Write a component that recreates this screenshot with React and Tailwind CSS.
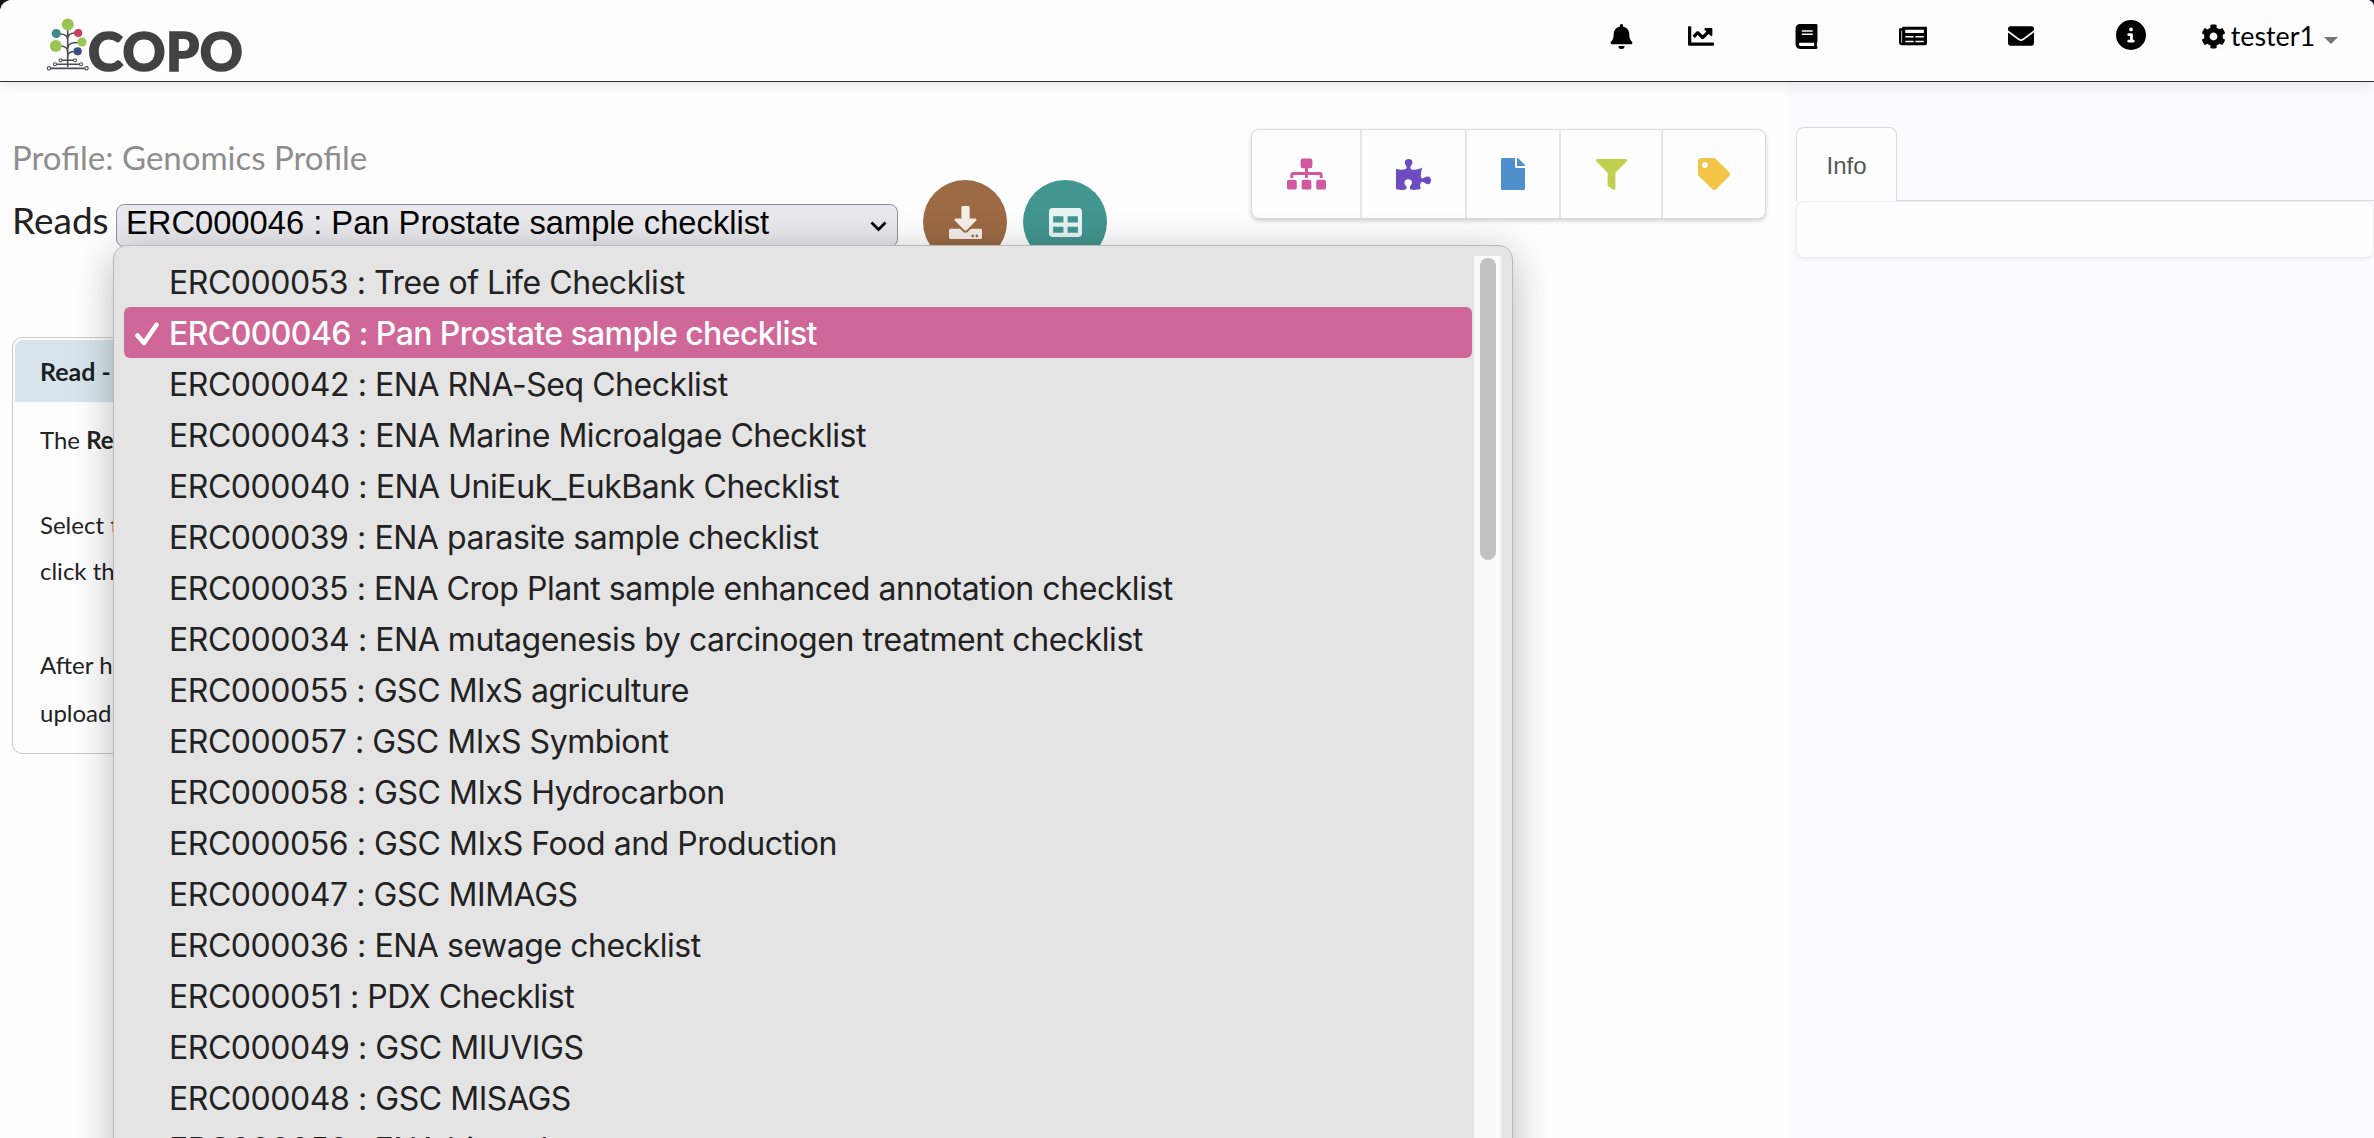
import React from "react";
import { FaBell, FaChartLine, FaBook, FaNewspaper, FaEnvelope, FaCog, FaSitemap, FaPuzzlePiece, FaFile, FaFilter, FaTag, FaDownload, FaTable } from "react-icons/fa";

const options = [
  "ERC000053 : Tree of Life Checklist",
  "ERC000046 : Pan Prostate sample checklist",
  "ERC000042 : ENA RNA-Seq Checklist",
  "ERC000043 : ENA Marine Microalgae Checklist",
  "ERC000040 : ENA UniEuk_EukBank Checklist",
  "ERC000039 : ENA parasite sample checklist",
  "ERC000035 : ENA Crop Plant sample enhanced annotation checklist",
  "ERC000034 : ENA mutagenesis by carcinogen treatment checklist",
  "ERC000055 : GSC MIxS agriculture",
  "ERC000057 : GSC MIxS Symbiont",
  "ERC000058 : GSC MIxS Hydrocarbon",
  "ERC000056 : GSC MIxS Food and Production",
  "ERC000047 : GSC MIMAGS",
  "ERC000036 : ENA sewage checklist",
  "ERC000051 : PDX Checklist",
  "ERC000049 : GSC MIUVIGS",
  "ERC000048 : GSC MISAGS",
  "ERC000050 : ENA binned metagenome",
];

function Logo() {
  return (
    <svg className="block h-[54px] w-[44px] shrink-0" viewBox="46 17 44 54" fill="none">
      <g stroke="#4c4c52" strokeWidth="1.6">
        <path d="M67.700 30V67M60 34c5 0 7.700 2 7.700 6M75 33c-5 0-7.300 2-7.300 6M60 46c5 0 7.700 2 7.700 6M79 42.500c-7 0-11.300 1-11.300 6M75 51.500c-5 0-7.300 1-7.300 6M62 60.200H73.500M56.500 64.300H79.500M50.500 68.400H85" />
        <g fill="#fff" strokeWidth="1.100">
          <circle cx="60.500" cy="60.200" r="1.500" /><circle cx="75" cy="60.200" r="1.500" />
          <circle cx="55" cy="64.300" r="1.500" /><circle cx="81" cy="64.300" r="1.500" />
          <circle cx="49" cy="68.300" r="1.700" /><circle cx="86.500" cy="68.300" r="1.700" />
        </g>
      </g>
      <circle cx="67.800" cy="24.500" r="6" fill="#9bc455" />
      <circle cx="56.300" cy="33.500" r="4.600" fill="#41888b" />
      <circle cx="78.200" cy="33" r="4.100" fill="#cb3f60" />
      <circle cx="55.800" cy="46" r="6" fill="#9bc455" />
      <circle cx="82" cy="42" r="4.600" fill="#9bc455" />
      <circle cx="77.700" cy="51.300" r="4.100" fill="#374e82" />
    </svg>
  );
}

function InfoIcon() {
  return (
    <svg className="h-[30px] w-[30px]" viewBox="0 0 512 512">
      <path fill="#000" d="M256 512A256 256 0 1 0 256 0a256 256 0 1 0 0 512zM216 336h24V272H216c-13.300 0-24-10.700-24-24s10.700-24 24-24h48c13.300 0 24 10.700 24 24v88h8c13.300 0 24 10.700 24 24s-10.700 24-24 24H216c-13.300 0-24-10.700-24-24s10.700-24 24-24zm40-208a32 32 0 1 1 0 64 32 32 0 1 1 0-64z" />
    </svg>
  );
}

function Header() {
  return (
    <header className="z-10 flex h-[82px] w-full shrink-0 border-b border-[#2e2e2e] bg-[#fdfdfd] pl-[46px] shadow-[0_2px_14px_rgba(0,0,0,0.10)]">
      <div className="flex pt-[17px]">
        <Logo />
        <div className="mt-[6px] ml-[-2px] flex h-[54px] items-center font-[Lato] text-[53px] leading-none font-black tracking-[0.5px] text-[#424242] [-webkit-text-stroke:1.6px_#424242]">
          COPO
        </div>
      </div>
      <nav className="ml-auto flex h-[72px] items-center text-black">
        <FaBell className="mr-[54px] size-[25px]" />
        <FaChartLine className="mr-[80px] size-[26px]" />
        <FaBook className="mr-[80px] size-[25px]" />
        <FaNewspaper className="mr-[81px] size-[28px]" />
        <FaEnvelope className="mr-[82px] size-[26px]" />
        <span className="mr-[55px] -mt-[3px]"><InfoIcon /></span>
        <FaCog className="size-[25px]" />
        <span className="ml-[5px] font-[Lato] text-[26.800px]">tester1</span>
        <span className="mt-[9px] mr-[36px] ml-[9px] border-x-[7px] border-t-[7px] border-x-transparent border-t-[#777]" />
      </nav>
    </header>
  );
}

function Toolbar() {
  return (
    <div className="mt-[47px] mr-[21px] ml-auto flex h-[90px] w-[515px] rounded-[8px] border border-[#dadada] bg-[#fefefe] shadow-[0_2px_4px_rgba(0,0,0,0.18)]">
      <div className="flex w-[110px] items-center justify-center border-r-2 border-[#e6e6e6]"><FaSitemap className="h-[32px] w-[39px] text-[#d1589f]" /></div>
      <div className="flex w-[105px] items-center justify-center border-r-2 border-[#e6e6e6]"><FaPuzzlePiece className="size-[35px] text-[#6c4bc3]" /></div>
      <div className="flex w-[94px] items-center justify-center border-r-2 border-[#e6e6e6]"><FaFile className="size-[32px] text-[#4f8fcc]" /></div>
      <div className="flex w-[102px] items-center justify-center border-r-2 border-[#e6e6e6]"><FaFilter className="size-[31px] text-[#c0d04e]" /></div>
      <div className="flex flex-1 items-center justify-center"><FaTag className="size-[32px] text-[#f2c448]" /></div>
    </div>
  );
}

function ReadPanel() {
  return (
    <section className="mt-[73px] ml-[12px] h-[417px] w-[1300px] rounded-[10px] border border-[#c9c9c9] bg-[#fefefe] p-[2px] font-[Lato] text-[24px] text-[#222]">
      <h2 className="h-[62px] rounded-t-[8px] bg-[#d7e4eb] pl-[25px] text-[25px] leading-[62px] font-bold text-[#1a1f24]">Read -</h2>
      <div className="pl-[25px]">
        <p className="mt-[15px] h-[46px] leading-[46px]">The <b>Reads</b></p>
        <p className="mt-[39px] h-[46px] leading-[46px]">Select the</p>
        <p className="h-[46px] leading-[46px]">click the</p>
        <p className="mt-[48px] h-[46px] leading-[46px]">After having</p>
        <p className="mt-[2px] h-[46px] leading-[46px]">upload</p>
      </div>
    </section>
  );
}

function Menu() {
  return (
    <div className="absolute top-[245px] left-[113px] z-20 flex h-[940px] w-[1400px] rounded-[14px] border border-[#b9b9b9] bg-[#e4e4e4] pt-[10px] pl-[10px] shadow-[0_8px_40px_rgba(0,0,0,0.28)]">
      <ul className="w-[1348px] font-[Inter] text-[32px] tracking-[-0.450px] text-[#222]">
        {options.map((label, i) => (
          <li
            key={label}
            className={i === 1
              ? "flex h-[51px] items-center rounded-[6px] bg-[#d06799] pt-[3px] font-medium tracking-[-0.600px] text-white"
              : "flex h-[51px] items-center pt-[3px]"}
          >
            <span className="flex w-[45px] shrink-0 justify-center">
              {i === 1 && (
                <svg className="h-[24px] w-[26px]" viewBox="0 0 26 24" fill="none" stroke="#fff" strokeWidth="4.600" strokeLinecap="round" strokeLinejoin="round">
                  <path d="M3.500 13.500L10 21L22.500 2.800" />
                </svg>
              )}
            </span>
            <span className="whitespace-nowrap">{label}</span>
          </li>
        ))}
      </ul>
      <div className="ml-[2px] w-[28px] border-r-2 border-[#eeeeee] bg-[#fafafa] pt-[2px] pl-[6px]">
        <div className="h-[302px] w-[16px] rounded-full bg-[#c1c1c1]" />
      </div>
    </div>
  );
}

export default function App() {
  return (
    <div className="bg-[#15151c]">
      <div className="relative flex h-[1138px] w-[2374px] flex-col overflow-hidden rounded-tl-[12px] rounded-tr-[7px] bg-[#fefefe]">
        <Header />
        <main className="flex flex-1">
          <div className="w-[1787px]">
            <div className="flex">
              <div className="ml-[12px] w-[1100px]">
                <p className="mt-[53px] h-[44px] font-[Lato] text-[33px] leading-[44px] text-[#8e8e8e]">Profile: Genomics Profile</p>
                <div className="mt-px flex h-[84px]">
                  <h1 className="mt-[18px] w-[104px] font-[Lato] text-[37px] leading-[44px] text-[#222]">Reads</h1>
                  <div className="mt-[24px] flex h-[43px] w-[782px] items-center rounded-[8px] border border-[#8f8f9d] bg-[#e9e9ed] pr-[10px] pl-[9px] font-['Liberation_Sans'] text-[32.700px] leading-none text-black">
                    <span className="-mt-[4px] whitespace-nowrap">ERC000046 : Pan Prostate sample checklist</span>
                    <svg className="mt-[2px] ml-auto h-[11px] w-[17px]" viewBox="0 0 17 11" fill="none" stroke="#000" strokeWidth="2.800"><path d="M1.500 1.500L8.500 8.500L15.500 1.500" /></svg>
                  </div>
                  <button className="ml-[25px] flex size-[84px] shrink-0 items-center justify-center rounded-full bg-[#9c6a44] text-[#f5efea]"><FaDownload className="size-[33px]" /></button>
                  <button className="ml-[16px] flex size-[84px] shrink-0 items-center justify-center rounded-full bg-[#42968f] text-[#e6f4f3]"><FaTable className="size-[33px]" /></button>
                </div>
              </div>
              <Toolbar />
            </div>
            <ReadPanel />
          </div>
          <aside className="flex-1 bg-[#fafbfd] pt-[45px] pl-[9px] font-['Liberation_Sans']">
            <div className="flex">
              <div className="flex h-[74px] w-[101px] items-center justify-center rounded-t-[8px] border border-b-0 border-[#d9dbdd] bg-[#fefefe] pt-[3px] text-[24px] text-[#555]">Info</div>
              <div className="flex-1 border-b border-[#d9dbdd]" />
            </div>
            <div className="h-[57px] rounded-[8px] border border-[#ebeff4] bg-[#fefefe] shadow-[0_2px_4px_rgba(0,0,0,0.06)]" />
          </aside>
        </main>
        <Menu />
      </div>
    </div>
  );
}
